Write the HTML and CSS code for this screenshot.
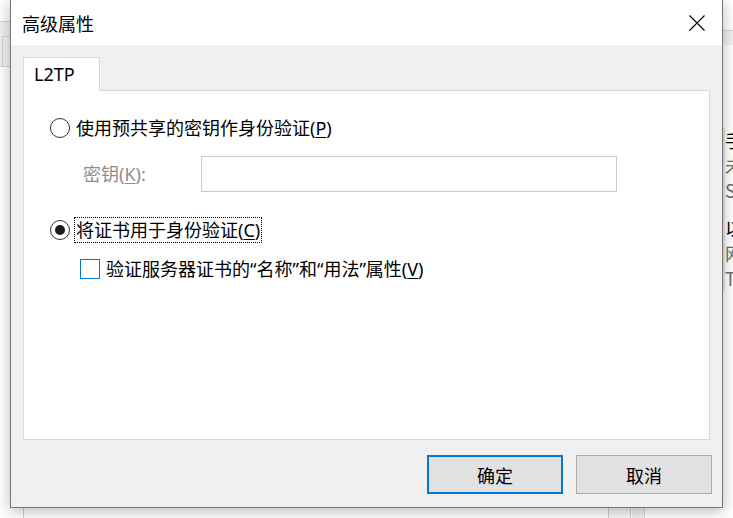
FILE: index.html
```html
<!DOCTYPE html>
<html lang="zh-CN">
<head>
<meta charset="utf-8">
<title>高级属性</title>
<link rel="stylesheet" href="styles.css">
</head>
<body>
<div class="desktop">
  <div class="bg-left">
    <div class="bg-left-box"></div>
  </div>
  <div class="bg-right-strip"></div>
  <div class="bg-right-text">
    <div class="bgl dark">手</div>
    <div class="bgl gray">未</div>
    <div class="bgl gray">S</div>
    <div class="bgl dark gap">以</div>
    <div class="bgl gray">网</div>
    <div class="bgl gray">T</div>
  </div>
  <div class="bg-bottom">
    <div class="bg-bottom-a"></div>
    <div class="bg-bottom-b"></div>
  </div>

  <div class="dialog">
    <div class="titlebar">
      <span class="title">高级属性</span>
      <svg class="close" width="16" height="16" viewBox="0 0 16 16">
        <path d="M0.5 0.5 L15.5 15.5 M15.5 0.5 L0.5 15.5" stroke="#000" stroke-width="1.1" fill="none"/>
      </svg>
    </div>
    <div class="body">
      <div class="tabs"><div class="tab">L2TP</div></div>
      <div class="panel">
        <div class="row">
          <span class="radio"></span>
          <span class="label">使用预共享的密钥作身份验证(<u>P</u>)</span>
        </div>
        <div class="row keyrow">
          <span class="keylabel">密钥(<u>K</u>):</span>
          <span class="input"></span>
        </div>
        <div class="row row2">
          <span class="radio checked"></span>
          <span class="label focus">将证书用于身份验证(<u>C</u>)</span>
        </div>
        <div class="row row3">
          <span class="check"></span>
          <span class="label">验证服务器证书的“名称”和“用法”属性(<u>V</u>)</span>
        </div>
      </div>
      <div class="buttons">
        <div class="btn default">确定</div>
        <div class="btn">取消</div>
      </div>
    </div>
  </div>
</div>
</body>
</html>
```
FILE: styles.css
```css
* { box-sizing: border-box; }
html, body { margin: 0; padding: 0; }
body {
  width: 733px;
  height: 518px;
  overflow: hidden;
  background: #ffffff;
  font-family: "Noto Sans", "Noto Sans CJK SC", sans-serif;
  font-size: 18px;
  color: #000;
}
.desktop {
  position: relative;
  width: 733px;
  height: 518px;
  overflow: hidden;
}
/* fragments of the window behind */
.bg-left {
  position: absolute;
  left: 0; top: 21px;
  width: 12px; height: 46px;
  background: #f0f0f0;
  border-top: 1px solid #d6d6d6;
  border-bottom: 1px solid #e2e2e2;
}
.bg-left-box {
  position: absolute;
  left: 2px; top: 14px;
  width: 20px; height: 31px;
  border: 1px solid #d4d4d4;
  background: #f3f3f3;
}
.bg-right-strip {
  position: absolute;
  left: 720px; top: 30px;
  width: 13px; height: 15px;
  background: #f0f0f0;
  border-top: 1px solid #d6d6d6;
}
.bg-right-text {
  position: absolute;
  left: 723px; top: 128px;
  width: 10px;
  border-left: 2px solid #e6e6e6;
}
.bgl {
  height: 25px;
  line-height: 25px;
  font-size: 18px;
  font-family: "Noto Sans CJK SC", "Noto Sans", sans-serif;
  white-space: nowrap;
  padding-left: 0;
}
.bgl.gap { margin-top: 13px; }
.bgl.dark { color: #000; }
.bgl.gray { color: #6d6d6d; }
.bg-bottom {
  position: absolute;
  left: 0; top: 500px;
  width: 733px; height: 18px;
}
.bg-bottom::before {
  content: "";
  position: absolute;
  left: 23px; top: 0;
  width: 1px; height: 18px;
  background: #cfcfcf;
}
.bg-bottom-a {
  position: absolute;
  left: 608px; top: 0;
  width: 23px; height: 18px;
  border-left: 1px solid #cfcfcf;
  border-right: 1px solid #cfcfcf;
  background: #f7f7f7;
}
.bg-bottom-b {
  position: absolute;
  left: 632px; top: 0;
  width: 13px; height: 18px;
  background: #f0f0f0;
  border-right: 1px solid #d9d9d9;
}

/* dialog window */
.dialog {
  position: absolute;
  left: 10px; top: -1px;
  width: 713px; height: 509px;
  border: 1px solid #777777;
  background: #f0f0f0;
  display: flex;
  flex-direction: column;
  box-shadow: 0 3px 14px rgba(0, 0, 0, 0.28);
}
.titlebar {
  height: 45px;
  flex: none;
  background: #ffffff;
  display: flex;
  align-items: center;
  justify-content: space-between;
  padding: 0 17px 0 11px;
}
.title {
  font-family: "Noto Sans CJK SC", sans-serif;
  font-size: 18px;
  line-height: 24px;
}
.close { display: block; margin-top: 1px; }

.body {
  flex: 1;
  display: flex;
  flex-direction: column;
  padding: 12px 10px 13px 12px;
}
.tabs { display: flex; position: relative; z-index: 1; }
.tab {
  width: 77px;
  height: 34px;
  margin-bottom: -1px;
  background: #ffffff;
  border: 1px solid #d9d9d9;
  border-bottom: none;
  padding-left: 10px;
  line-height: 32px;
}
.panel {
  width: 687px;
  height: 350px;
  background: #ffffff;
  border: 1px solid #d9d9d9;
  padding: 24px 0 0 26px;
  display: flex;
  flex-direction: column;
}
.row {
  display: flex;
  align-items: center;
  height: 26px;
  line-height: 24px;
  white-space: nowrap;
}
.radio {
  width: 20px; height: 20px;
  border: 1px solid #333333;
  border-radius: 50%;
  background: #ffffff;
  display: flex;
  align-items: center;
  justify-content: center;
  flex: none;
}
.radio.checked::after {
  content: "";
  width: 10px; height: 10px;
  border-radius: 50%;
  background: #1a1a1a;
}
.label {
  margin-left: 6px;
  border: 1px solid transparent;
  padding: 0 1px;
  margin-left: 4px;
}
.label.focus { border: 1px dotted #000; }
u { text-decoration: underline; text-underline-offset: 2px; text-decoration-thickness: 1px; }

.keyrow {
  height: 36px;
  margin-top: 15px;
  padding-left: 33px;
}
.keylabel {
  width: 118px;
  color: #8e8e8e;
}
.input {
  width: 416px;
  height: 36px;
  border: 1px solid #cccccc;
  background: #ffffff;
}
.row2 { margin-top: 25px; }
.row3 { margin-top: 13px; padding-left: 30px; }
.check {
  width: 20px; height: 20px;
  border: 1px solid #0078d7;
  background: #ffffff;
  flex: none;
}
.row3 .label { margin-left: 4px; }

.buttons {
  margin-top: 15px;
  display: flex;
  justify-content: flex-end;
  gap: 13px;
}
.btn {
  width: 136px;
  height: 39px;
  background: #e1e1e1;
  border: 1px solid #adadad;
  display: flex;
  align-items: center;
  justify-content: center;
  font-family: "Noto Sans CJK SC", sans-serif;
  font-size: 18px;
}
.btn.default { border: 2px solid #0078d7; }
```
